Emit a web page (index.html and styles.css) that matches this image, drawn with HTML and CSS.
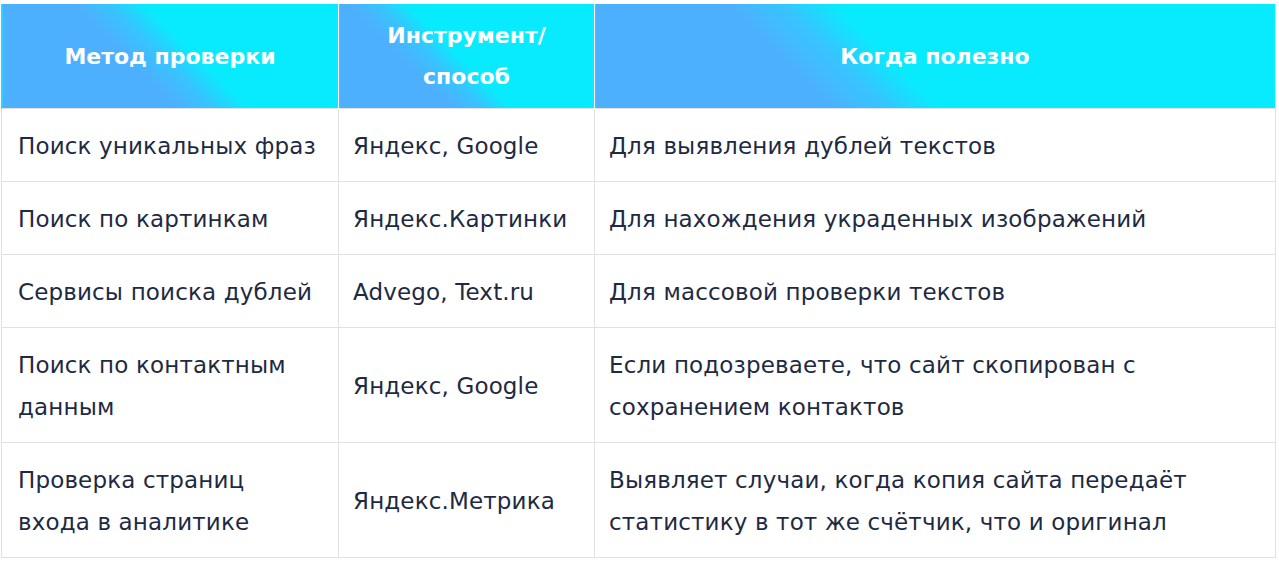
FILE: index.html
```html
<!DOCTYPE html>
<html lang="ru">
<head>
<meta charset="utf-8">
<link rel="stylesheet" href="styles.css">
</head>
<body>
<div class="wrap">
<table class="cmp">
  <colgroup>
    <col class="c1"><col class="c2"><col class="c3">
  </colgroup>
  <thead>
    <tr>
      <th class="h1">Метод проверки</th>
      <th class="h2">Инструмент/<br>способ</th>
      <th class="h3">Когда полезно</th>
    </tr>
  </thead>
  <tbody>
    <tr>
      <td>Поиск уникальных фраз</td>
      <td>Яндекс, Google</td>
      <td>Для выявления дублей текстов</td>
    </tr>
    <tr>
      <td>Поиск по картинкам</td>
      <td>Яндекс.Картинки</td>
      <td>Для нахождения украденных изображений</td>
    </tr>
    <tr>
      <td>Сервисы поиска дублей</td>
      <td>Advego, Text.ru</td>
      <td>Для массовой проверки текстов</td>
    </tr>
    <tr>
      <td>Поиск по контактным данным</td>
      <td>Яндекс, Google</td>
      <td>Если подозреваете, что сайт скопирован с сохранением контактов</td>
    </tr>
    <tr>
      <td>Проверка страниц входа в аналитике</td>
      <td>Яндекс.Метрика</td>
      <td>Выявляет случаи, когда копия сайта передаёт статистику в тот же счётчик, что и оригинал</td>
    </tr>
  </tbody>
</table>
</div>
</body>
</html>
```

FILE: styles.css
```css
html, body {
  margin: 0;
  padding: 0;
  background: #ffffff;
}
.wrap {
  padding: 4px 0 0 1px;
}
.cmp {
  width: 1275px;
  border-collapse: collapse;
  table-layout: fixed;
  font-family: "DejaVu Sans", "Noto Sans", sans-serif;
  color: #1e2a42;
}
.c1 { width: 337px; }
.c2 { width: 256px; }
.c3 { width: auto; }
.cmp th {
  color: #ffffff;
  font-weight: 700;
  font-size: 22px;
  line-height: 41px;
  padding: 11px 16px;
  text-align: center;
  vertical-align: middle;
  border-left: 1px solid #ffffff;
  border-right: 1px solid #ffffff;
}
.cmp .h1 {
  background: linear-gradient(45deg, #4db0ff 40%, #36c4ff 48%, #08ebff 56%);
  border-left: 1px solid #08ebff;
}
.cmp .h2 {
  background: linear-gradient(45deg, #4db0ff 32%, #36c4ff 40%, #08ebff 48%);
}
.cmp .h3 {
  background: linear-gradient(45deg, #4db0ff 30%, #36c4ff 37%, #08ebff 44%);
  border-right: 1px solid #e1e1e1;
}
.cmp td {
  font-size: 23px;
  letter-spacing: 0.15px;
  line-height: 42px;
  padding: 16px 14px 14px;
  border: 1px solid #e1e1e1;
  vertical-align: middle;
  text-align: left;
}
.cmp td:first-child {
  padding-left: 16px;
  padding-right: 18px;
}
```
